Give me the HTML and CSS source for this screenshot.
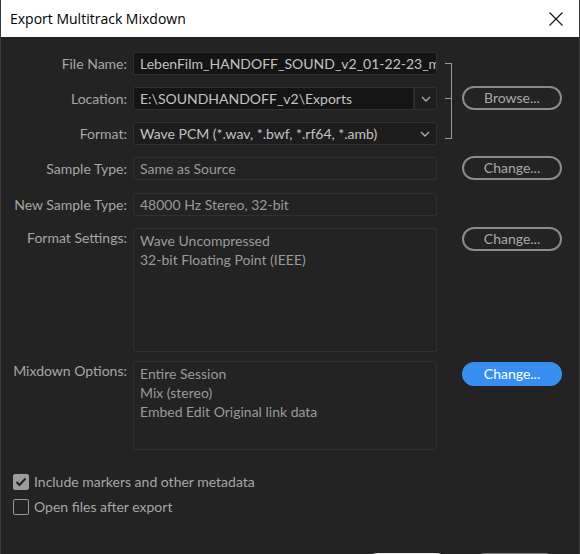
FILE: index.html
```html
<!DOCTYPE html>
<html lang="en">
<head>
    <meta charset="UTF-8" />
    <title>Export Multitrack Mixdown</title>
    <link rel="stylesheet" href="styles.css">
</head>
<body>
    <div class="window">
        <div class="titlebar">
            <span class="title">Export Multitrack Mixdown</span>
            <button class="close-btn" type="button" aria-label="Close">
                <svg width="14" height="14" viewBox="0 0 14 14"><path d="M0.5 0.5 L13.5 13.5 M13.5 0.5 L0.5 13.5" stroke="#111" stroke-width="1.1" fill="none"/></svg>
            </button>
        </div>

        <div class="dialog">
            <div class="form-grid">
                <div class="bracket"></div>
                <button class="pill btn-browse" type="button">Browse...</button>
                <button class="pill btn-sample" type="button">Change...</button>
                <button class="pill btn-format" type="button">Change...</button>
                <button class="pill pill-blue btn-mixdown" type="button">Change...</button>

                <label class="field-label">File Name:</label>
                <div class="field field-input">LebenFilm_HANDOFF_SOUND_v2_01-22-23_mix</div>

                <label class="field-label">Location:</label>
                <div class="field field-split">
                    <span class="split-text">E:\SOUNDHANDOFF_v2\Exports</span>
                    <span class="split-arrow">
                        <svg width="10" height="6" viewBox="0 0 10 6"><path d="M1 1 L5 5 L9 1" stroke="#b0b0b0" stroke-width="1.3" fill="none"/></svg>
                    </span>
                </div>

                <label class="field-label">Format:</label>
                <div class="field field-select">
                    <span>Wave PCM (*.wav, *.bwf, *.rf64, *.amb)</span>
                    <svg width="10" height="6" viewBox="0 0 10 6"><path d="M1 1 L5 5 L9 1" stroke="#b0b0b0" stroke-width="1.3" fill="none"/></svg>
                </div>

                <label class="field-label">Sample Type:</label>
                <div class="field field-disabled">Same as Source</div>

                <label class="field-label">New Sample Type:</label>
                <div class="field field-disabled">48000 Hz Stereo, 32-bit</div>

                <label class="field-label multi">Format Settings:</label>
                <div class="field field-box box-tall">
                    Wave Uncompressed<br>
                    32-bit Floating Point (IEEE)
                </div>

                <label class="field-label multi">Mixdown Options:</label>
                <div class="field field-box box-short">
                    Entire Session<br>
                    Mix (stereo)<br>
                    Embed Edit Original link data
                </div>
            </div>

            <div class="checks">
                <label class="check-row">
                    <span class="checkbox checked">
                        <svg width="12" height="10" viewBox="0 0 12 10"><path d="M1.5 5 L4.5 8 L10.5 1.5" stroke="#232323" stroke-width="2" fill="none"/></svg>
                    </span>
                    Include markers and other metadata
                </label>
                <label class="check-row">
                    <span class="checkbox"></span>
                    Open files after export
                </label>
            </div>

            <!-- Export / Cancel sit below the visible area -->
            <div class="footer">
                <button class="footer-btn footer-primary" type="button" aria-label="Export"></button>
                <button class="footer-btn" type="button" aria-label="Cancel"></button>
            </div>
        </div>
    </div>
</body>
</html>
```

FILE: styles.css
```css
/* Global */
html, body {
    margin: 0;
    height: 100%;
    overflow: hidden;
}

body {
    font-family: 'Lato', 'Open Sans', sans-serif;
    font-size: 14px;
    background-color: #232323;
}

.window {
    height: 100%;
    border-left: 1px solid #3c3c3c;
    border-right: 1px solid #3c3c3c;
    box-sizing: border-box;
    background-color: #232323;
}

/* Title bar */
.titlebar {
    height: 37px;
    background-color: #ffffff;
    display: flex;
    align-items: center;
    justify-content: space-between;
    padding-left: 9px;
}

.title {
    font-family: 'Open Sans', 'Noto Sans', sans-serif;
    font-size: 14px;
    color: #000;
    padding-bottom: 1px;
}

.close-btn {
    background: none;
    border: none;
    width: 46px;
    height: 37px;
    display: flex;
    align-items: center;
    justify-content: center;
    padding: 0;
}

/* Dialog body */
.dialog {
    padding-top: 15px;
}

.form-grid {
    display: grid;
    grid-template-columns: 126px 304px 13px 100px;
    grid-template-rows: 35px 35px 35px 36px 35px 133px 89px;
    column-gap: 6px;
    align-items: start;
}

.field-label {
    grid-column: 1;
    text-align: right;
    color: #a6a6a6;
    line-height: 23px;
    white-space: nowrap;
}

.field-label.multi {
    line-height: 20px;
}

.field {
    grid-column: 2;
    height: 23px;
    box-sizing: border-box;
    border: 1px solid #303030;
    border-radius: 2px;
    padding: 0 6px;
    line-height: 21px;
    color: #9a9a9a;
    white-space: nowrap;
    overflow: hidden;
}

.field-input {
    background-color: #141414;
    color: #c2c2c2;
}

.field-split {
    display: flex;
    padding: 0;
    background-color: #1e1e1e;
    color: #c2c2c2;
}

.split-text {
    flex: 1;
    padding: 0 6px;
    background-color: #141414;
    border-right: 2px solid #2c2c2c;
}

.split-arrow {
    width: 21px;
    display: flex;
    align-items: center;
    justify-content: center;
}

.field-select {
    display: flex;
    justify-content: space-between;
    align-items: center;
    background-color: #1d1d1d;
    color: #c2c2c2;
    padding-right: 6px;
}

.field-disabled {
    background-color: #232323;
}

.field-box {
    height: auto;
    white-space: normal;
    line-height: 19px;
    padding-top: 2px;
    background-color: #232323;
}

.box-tall {
    height: 124px;
}

.box-short {
    height: 89px;
}

/* Bracket grouping the first three rows */
.bracket {
    grid-column: 3;
    grid-row: 1 / 4;
    margin-top: 11px;
    margin-left: 2px;
    width: 6px;
    height: 74px;
    border: 1.5px solid #9a9a9a;
    border-left: none;
    position: relative;
}

.bracket::after {
    content: "";
    position: absolute;
    left: 0;
    top: 34px;
    width: 7px;
    border-top: 1.5px solid #9a9a9a;
}

/* Pill buttons */
.pill {
    grid-column: 4;
    height: 24px;
    box-sizing: border-box;
    border: 2px solid #8a8a8a;
    border-radius: 12px;
    background: none;
    color: #a8a8a8;
    font-family: inherit;
    font-size: 14px;
    padding: 0 0 1px;
}

.pill-blue {
    background-color: #378ef0;
    border-color: #378ef0;
    color: #ffffff;
}

.btn-browse { grid-row: 2; margin-top: -1px; }
.btn-sample { grid-row: 4; margin-top: -1px; }
.btn-format { grid-row: 6; margin-top: -1px; }
.btn-mixdown { grid-row: 7; margin-top: 1px; }

/* Checkboxes */
.checks {
    margin-top: 19px;
    padding-left: 12px;
}

.check-row {
    display: flex;
    align-items: center;
    gap: 5px;
    height: 25px;
    color: #a6a6a6;
}

.checkbox {
    width: 16px;
    height: 16px;
    box-sizing: border-box;
    border: 1.5px solid #979797;
    border-radius: 2px;
    display: flex;
    align-items: center;
    justify-content: center;
}

.checkbox.checked {
    background-color: #9c9c9c;
    border-color: #9c9c9c;
}

/* Footer buttons (mostly below the fold) */
.footer {
    margin-top: 34px;
    display: flex;
    justify-content: flex-end;
    gap: 22px;
    padding-right: 21px;
}

.footer-btn {
    width: 86px;
    height: 28px;
    border: 2px solid #8a8a8a;
    border-radius: 14px;
    background: #8a8a8a;
}

.footer-primary {
    background: #e6e6e6;
    border-color: #e6e6e6;
}
```
